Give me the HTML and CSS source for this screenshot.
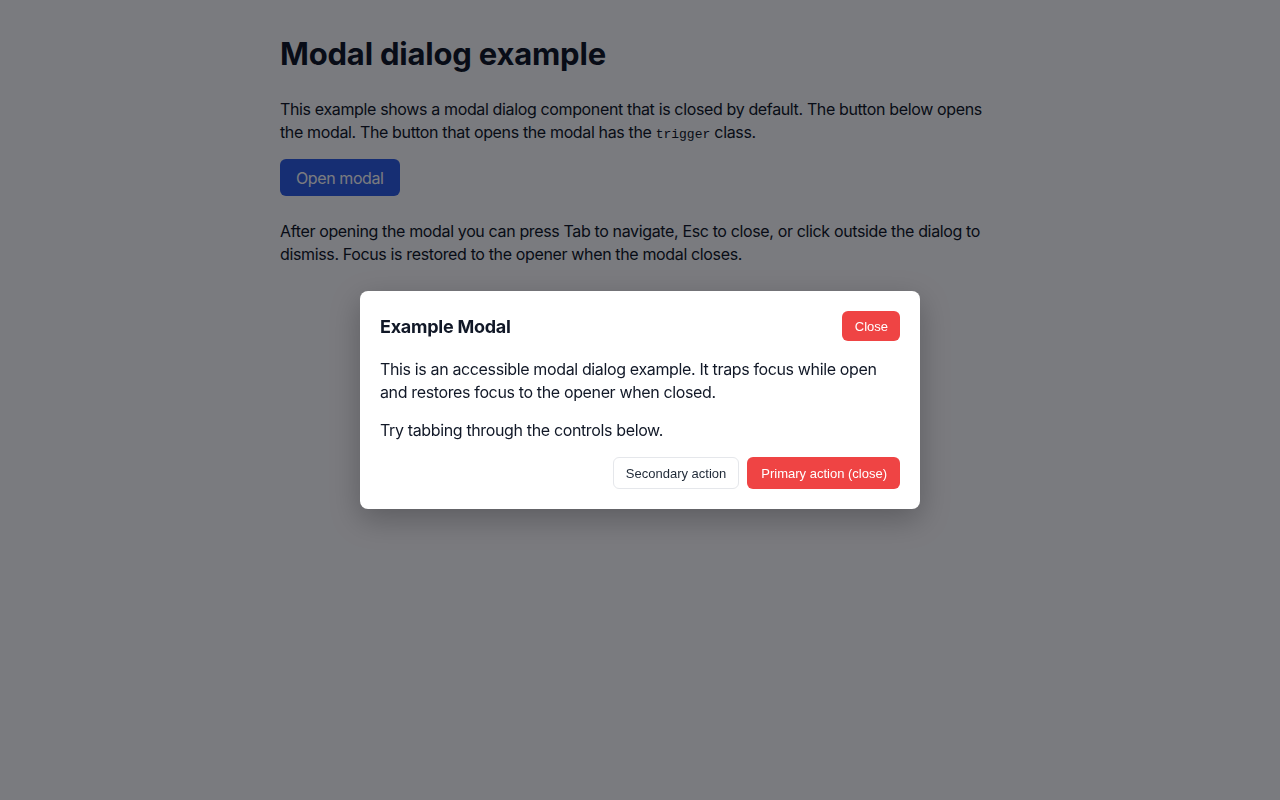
FILE: index.html
```html
<!DOCTYPE html>
<html lang="en">
<head>
<meta charset="utf-8">
<title>Modal dialog example</title>
<link rel="stylesheet" href="styles.css">
</head>
<body>
<main class="page">
  <h1 class="title">Modal dialog example</h1>
  <p class="text">This example shows a modal dialog component that is closed by default. The button below opens the modal. The button that opens the modal has the <code class="code">trigger</code> class.</p>
  <button class="trigger" type="button">Open modal</button>
  <p class="text">After opening the modal you can press Tab to navigate, Esc to close, or click outside the dialog to dismiss. Focus is restored to the opener when the modal closes.</p>
</main>
<div class="overlay">
  <div class="modal" role="dialog" aria-modal="true" aria-labelledby="modal-title">
    <div class="modal-header">
      <h2 class="modal-title" id="modal-title">Example Modal</h2>
      <button class="btn btn-danger btn-close" type="button">Close</button>
    </div>
    <p class="modal-text">This is an accessible modal dialog example. It traps focus while open and restores focus to the opener when closed.</p>
    <p class="modal-text">Try tabbing through the controls below.</p>
    <div class="modal-footer">
      <button class="btn btn-secondary" type="button">Secondary action</button>
      <button class="btn btn-danger btn-primary" type="button">Primary action (close)</button>
    </div>
  </div>
</div>
</body>
</html>
```

FILE: styles.css
```css
html, body {
  margin: 0;
  padding: 0;
  background: #ffffff;
}

body {
  font-family: Inter, "Noto Sans", "Liberation Sans", sans-serif;
  color: #111827;
}

.page {
  max-width: 720px;
  margin: 0 auto;
  padding: 34px 0 0;
}

.title {
  margin: 0 0 24px;
  font-size: 31px;
  line-height: 40px;
  font-weight: 700;
  letter-spacing: -0.2px;
}

.text {
  margin: 0 0 15px;
  font-size: 16px;
  line-height: 23px;
  letter-spacing: -0.36px;
}

.code {
  font-family: "Liberation Mono", "DejaVu Sans Mono", monospace;
  font-size: 13px;
  line-height: 1;
  letter-spacing: 0;
}

.trigger {
  display: block;
  margin: 0 0 24px;
  height: 37px;
  padding: 0 16px;
  border: 0;
  border-radius: 6px;
  background: #2e5ee6;
  color: #ffffff;
  font-family: inherit;
  font-size: 16px;
  letter-spacing: -0.4px;
}

.overlay {
  position: fixed;
  inset: 0;
  background: rgba(0, 2, 10, 0.52);
  display: flex;
  align-items: center;
  justify-content: center;
}

.modal {
  width: 560px;
  box-sizing: border-box;
  padding: 20px;
  background: #ffffff;
  border-radius: 8px;
  box-shadow: 0 10px 30px rgba(0, 0, 0, 0.25);
  display: flex;
  flex-direction: column;
  gap: 15px;
}

.modal-header {
  display: flex;
  align-items: center;
  justify-content: space-between;
  margin-bottom: 2px;
}

.modal-title {
  margin: 0;
  font-size: 18px;
  font-weight: 700;
  letter-spacing: -0.25px;
}

.modal-text {
  margin: 0;
  font-size: 16px;
  line-height: 23px;
  letter-spacing: -0.36px;
}

.modal-footer {
  display: flex;
  justify-content: flex-end;
  gap: 8px;
}

.btn {
  height: 32px;
  padding: 0 12px;
  border-radius: 6px;
  font-family: "Liberation Sans", Arial, sans-serif;
  font-size: 13px;
  cursor: pointer;
}

.btn-close {
  height: 30px;
  padding: 0 12px 0 13px;
}

.btn-primary {
  padding: 0 13px 0 14px;
}

.btn-danger {
  border: 0;
  background: #ef4444;
  color: #ffffff;
}

.btn-secondary {
  border: 1px solid #e5e7eb;
  background: #ffffff;
  color: #1f2937;
}
```
